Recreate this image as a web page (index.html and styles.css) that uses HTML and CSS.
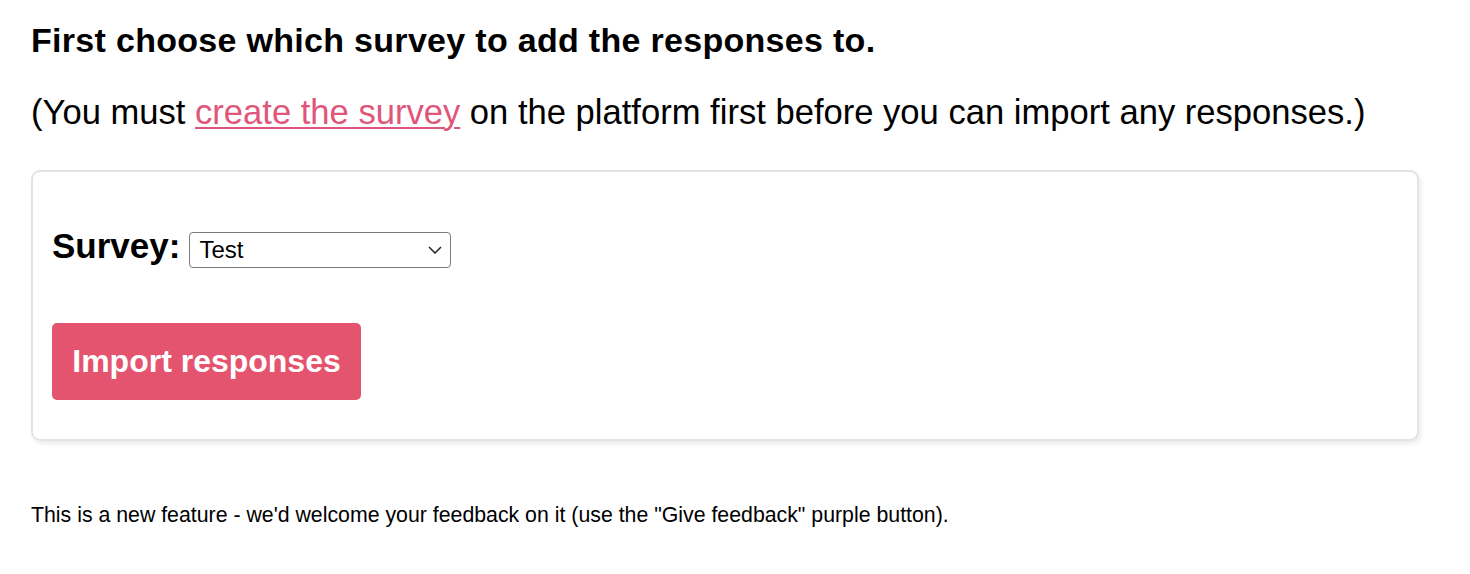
FILE: index.html
```html
<!DOCTYPE html>
<html>
<head>
<meta charset="utf-8">
<link rel="stylesheet" href="styles.css">
</head>
<body>
<div class="page">
  <h2 class="title">First choose which survey to add the responses to.</h2>
  <p class="lead">(You must <a href="#" class="link">create the survey</a> on the platform first before you can import any responses.)</p>
  <div class="card">
    <div class="field">
      <label class="label">Survey:</label>
      <div class="select">
        <span class="select-text">Test</span>
        <svg class="chev" width="14" height="8" viewBox="0 0 14 8"><path d="M1 1 L7 7 L13 1" fill="none" stroke="#222" stroke-width="1.5"/></svg>
      </div>
    </div>
    <button class="btn">Import responses</button>
  </div>
  <p class="note">This is a new feature - we'd welcome your feedback on it (use the "Give feedback" purple button).</p>
</div>
</body>
</html>
```
FILE: styles.css
```css
html, body { margin: 0; padding: 0; background: #fff; }
body { font-family: "Liberation Sans", Arial, sans-serif; color: #000; }
.page { padding: 20px 51px 0 31px; }
.title { font-size: 34px; letter-spacing: 0.3px; font-weight: bold; margin: 0; line-height: 40px; }
.lead { font-size: 34.6px; margin: 32px 0 0 0; line-height: 40px; }
.link { color: #e0567a; text-decoration: underline; text-decoration-thickness: 2px; text-underline-offset: 3px; }
.card {
  margin-top: 38px;
  border: 2px solid #e3e3e3;
  border-radius: 9px;
  box-shadow: 2px 3px 5px rgba(0,0,0,0.08);
  padding: 56px 19px 39px 19px;
}
.field { display: flex; align-items: baseline; gap: 9px; }
.label { font-size: 35px; font-weight: bold; line-height: 36px; }
.select {
  width: 262px; height: 36px; box-sizing: border-box;
  border: 1.5px solid #7a7a7a; border-radius: 4px;
  display: flex; align-items: baseline; justify-content: space-between;
  padding: 0 8px 0 9px;
}
.select-text { font-size: 24px; line-height: 34px; }
.chev { align-self: center; }
.btn {
  margin-top: 55px;
  background: #e5546f; color: #fff; border: none; border-radius: 5px;
  font-family: "Liberation Sans", Arial, sans-serif;
  font-size: 32px; font-weight: bold;
  width: 309px; height: 77px; padding: 0;
  display: block;
}
.note { font-size: 21.3px; margin: 62px 0 0 0; line-height: 24px; }
```
